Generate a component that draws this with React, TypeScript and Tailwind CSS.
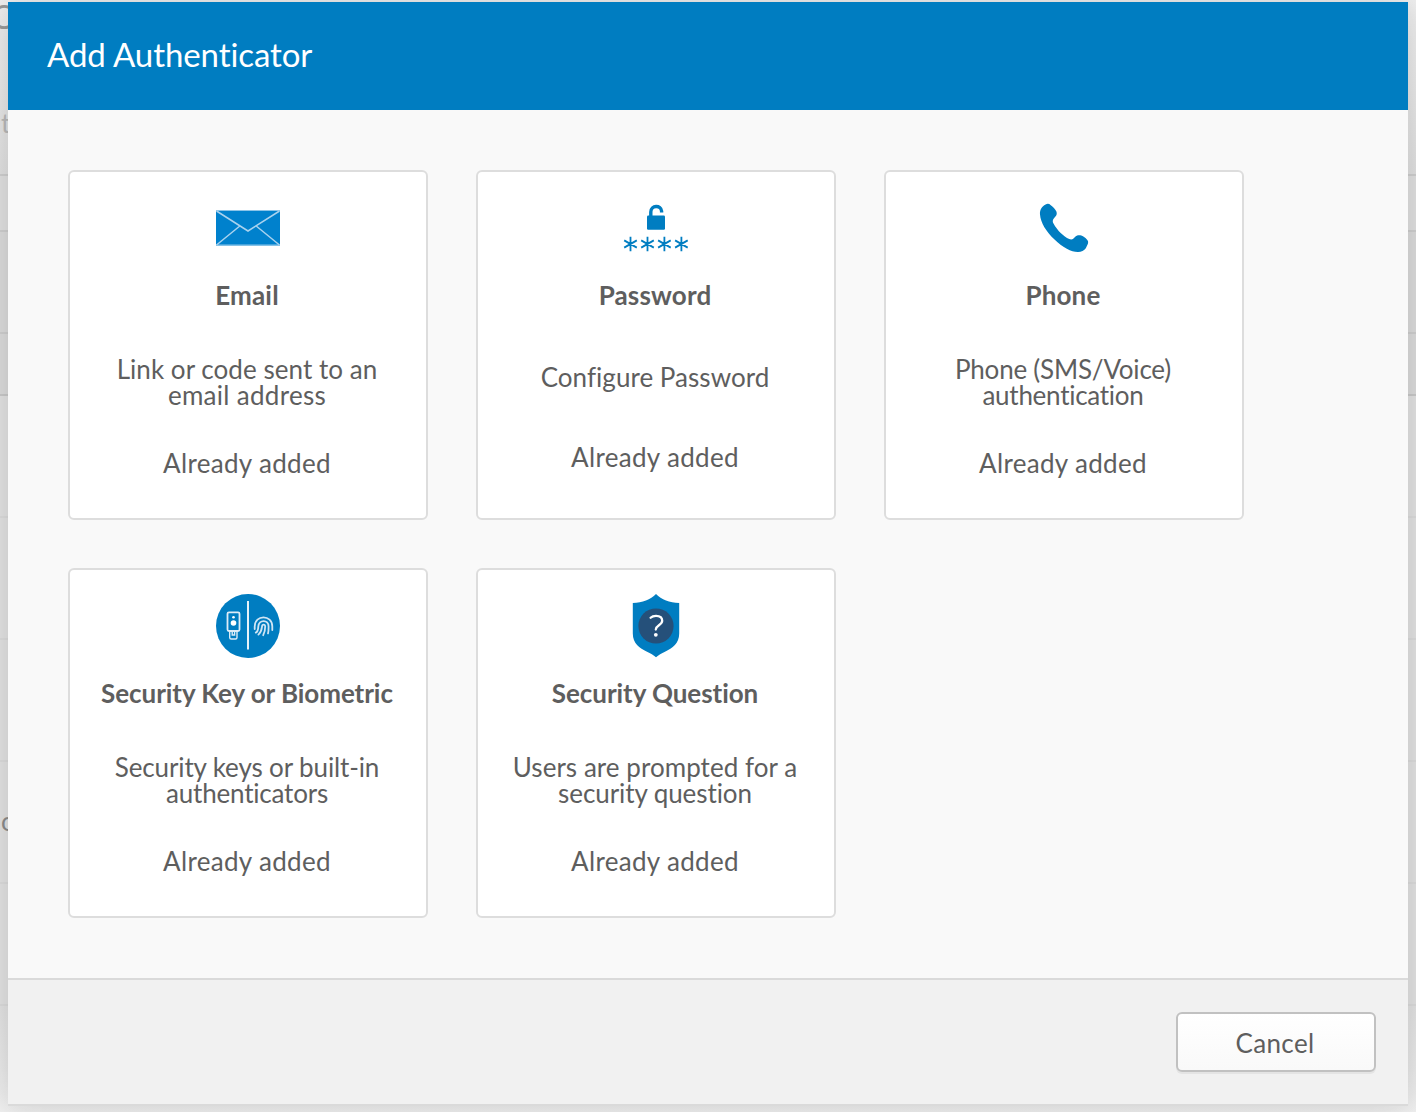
import type { ReactNode } from "react";

const EmailIcon = () => (
  <svg width="64" height="64" viewBox="0 0 64 64" fill="none">
    <rect x="0" y="14" width="64" height="35.5" fill="#0081cd" />
    <path d="M0 14.5H64M0 49H64" stroke="#8cc4e8" strokeWidth="1" />
    <path d="M0.5 15 32 35 63.5 15M0.5 49 23.8 30M63.5 49 40.2 30" stroke="#a9d2ee" strokeWidth="1.5" />
  </svg>
);

const star = (x: number) => `M${x} 40.7V55.3M${x - 6.3} 44.4 ${x + 6.3} 51.6M${x - 6.3} 51.6 ${x + 6.3} 44.4`;

const PasswordIcon = () => (
  <svg width="64" height="64" viewBox="0 0 64 64" fill="none" className="overflow-visible">
    <rect x="23" y="19.5" width="18" height="14.2" rx="1.2" fill="#007dc1" />
    <path d="M26.8 21V16C26.8 8.8 37.2 8.8 37.6 15.2V16.6" stroke="#007dc1" strokeWidth="3.4" />
    <path d={[6.5, 23.5, 40.4, 57.4].map(star).join("")} stroke="#007dc1" strokeWidth="1.8" />
  </svg>
);

const PhoneIcon = () => (
  <svg width="64" height="64" viewBox="0 0 64 64">
    <path
      d="M13.6 8.4C15.6 7.5 17.2 7.7 18.8 9.2C20.8 10.9 23.3 13 24.4 15.4C25.2 17.5 24.6 19.2 23.2 20.8L21.4 22.9C20.5 24.5 20.6 25.8 21.5 27.5C25.5 34.7 31.5 40.4 37.2 43C38.9 43.7 40.3 43.5 41.5 42.4L43.5 40.6C45 39.3 47 38.8 49.3 39.6C51.7 40.5 53.4 42 55.1 43.7C56.3 45 56.4 46.2 55.8 48.1L53.8 52.3C52.3 54.7 49.2 56 46.2 56C39.6 56.2 31 51.7 22.8 43.8C14.1 35.4 8.7 27 8 18.5C7.7 13.5 9.8 10.6 13.6 8.4Z"
      fill="#007dc1"
    />
  </svg>
);

const BiometricIcon = () => (
  <svg width="64" height="64" viewBox="0 0 64 64" fill="none">
    <circle cx="32" cy="32" r="32" fill="#007dc1" />
    <path d="M32 7V55.5" stroke="#fff" strokeWidth="1.8" />
    <g stroke="#dcecf7" strokeWidth="1.8">
      <rect x="11.5" y="18.3" width="12" height="18.7" rx="1.5" />
      <path d="M13.7 37.5V43.5Q13.7 45 15.2 45H19.5Q21 45 21 43.5V37.5M16.2 38V41H18.6V38" strokeWidth="1.4" />
    </g>
    <circle cx="17.5" cy="29" r="2.8" fill="#fff" />
    <circle cx="17.5" cy="23.2" r="1.3" fill="#fff" />
    <g stroke="#cfe5f4" strokeWidth="1.8" strokeLinecap="round">
      <path d="M38.7 35V32.5C38.7 20.4 56.3 20.4 56.3 32.5V36" />
      <path d="M39.8 38.6C42 37.6 42.2 35 42.3 32.6C42.7 25.2 52.7 25.2 52.6 32.5C52.6 35.5 52.6 37.5 52 39.4" />
      <path d="M42.4 40.6C45.6 38 45.7 35 46 32.6C46.2 30 49.2 30 49.2 32.5C49.2 36 48.6 38.5 47.2 41.2" />
    </g>
  </svg>
);

const QuestionIcon = () => (
  <svg width="64" height="64" viewBox="0 0 64 64" fill="none">
    <path d="M32 0C37.5 5.3 45.5 8.9 55.2 8.9V39.5C55.2 49.5 48.5 54 41 57.8C37.5 59.5 34.5 61 32 63.3C29.5 61 26.5 59.5 23 57.8C15.5 54 8.8 49.5 8.8 39.5V8.9C18.5 8.9 26.5 5.3 32 0Z" fill="#007dc1" />
    <circle cx="32" cy="32" r="17.6" fill="#25507a" />
    <path d="M26.6 23.8C28 22.4 29.8 21.9 32 21.9C35.7 21.9 38.2 23.6 38.2 26.8C38.2 31.2 31.8 31.3 31.8 35.5" stroke="#fff" strokeWidth="2.3" strokeLinecap="round" />
    <circle cx="31.8" cy="40.8" r="1.9" fill="#fff" />
  </svg>
);

type Card = {
  icon: ReactNode;
  title: string;
  titleClass: string;
  lines: { text: string; className: string }[];
  bodyClass: string;
};

const cards: Card[] = [
  {
    icon: <EmailIcon />,
    title: "Email",
    titleClass: "tracking-[0.2px]",
    lines: [
      { text: "Link or code sent to an", className: "tracking-[0.05px]" },
      { text: "email address", className: "tracking-[0.3px]" },
    ],
    bodyClass: "mt-[48px] mb-[42px]",
  },
  {
    icon: <PasswordIcon />,
    title: "Password",
    titleClass: "tracking-[0.15px]",
    lines: [{ text: "Configure Password", className: "tracking-[0.04px]" }],
    bodyClass: "mt-[56px] mb-[54px]",
  },
  {
    icon: <PhoneIcon />,
    title: "Phone",
    titleClass: "tracking-[0.15px]",
    lines: [
      { text: "Phone (SMS/Voice)", className: "tracking-[-0.22px]" },
      { text: "authentication", className: "tracking-[-0.27px]" },
    ],
    bodyClass: "mt-[48px] mb-[42px]",
  },
  {
    icon: <BiometricIcon />,
    title: "Security Key or Biometric",
    titleClass: "tracking-[-0.06px]",
    lines: [
      { text: "Security keys or built-in", className: "tracking-[-0.12px]" },
      { text: "authenticators", className: "tracking-[-0.2px]" },
    ],
    bodyClass: "mt-[48px] mb-[42px]",
  },
  {
    icon: <QuestionIcon />,
    title: "Security Question",
    titleClass: "tracking-[-0.06px]",
    lines: [
      { text: "Users are prompted for a", className: "tracking-[0.05px]" },
      { text: "security question", className: "tracking-[-0.08px]" },
    ],
    bodyClass: "mt-[48px] mb-[42px]",
  },
];

function AuthenticatorCard({ card }: { card: Card }) {
  return (
    <div className="flex h-[350px] w-[360px] flex-col items-center rounded-[6px] border-2 border-[#dddddd] bg-white pt-6 pr-[2px] text-[26px] leading-[26px] whitespace-nowrap">
      <div className="ml-[2px]">{card.icon}</div>
      <h2 className={`mt-[22px] font-bold ${card.titleClass}`}>{card.title}</h2>
      <div className={`flex flex-col items-center ${card.bodyClass}`}>
        {card.lines.map((line) => (
          <span key={line.text} className={line.className}>
            {line.text}
          </span>
        ))}
      </div>
      <p className="tracking-[0.33px]">Already added</p>
    </div>
  );
}

function Backdrop() {
  return (
    <div className="flex h-full flex-col bg-[#e3e3e3]">
      <div className="flex h-[176px] flex-col border-b-2 border-[#cfcfcf] bg-linear-to-b from-[#f0f0f0] to-[#e1e1e1]">
        <span className="-mt-[7px] -ml-[9px] text-[33px] leading-[46px] text-[#9a9a9a]">O</span>
        <span className="mt-[68px] ml-[1px] text-[26px] leading-[32px] text-[#b9b9b9]">t</span>
      </div>
      <div className="h-[56px] border-b-2 border-[#cfcfcf] bg-[#e1e1e1]" />
      <div className="h-[102px] border-b-2 border-[#cfcfcf] bg-[#dcdcdc]" />
      <div className="h-[62px] border-b-2 border-[#c9c9c9] bg-[#dcdcdc]" />
      <div className="h-[122px] border-b-2 border-[#dcdcdc]" />
      <div className="h-[122px] border-b-2 border-[#dcdcdc]" />
      <div className="h-[122px] border-b-2 border-[#dcdcdc]" />
      <div className="h-[122px] border-b-2 border-[#dcdcdc] pt-[43px] pl-[1px] text-[26px] leading-[32px] text-[#8c8c8c]">o</div>
      <div className="h-[122px] border-b-2 border-[#dcdcdc]" />
      <div className="flex-1 bg-linear-to-b from-[#e3e3e3] to-[#f0f0f0]" />
    </div>
  );
}

export default function App() {
  return (
    <div className="relative h-[1112px] w-[1416px] overflow-hidden font-['Lato',sans-serif] text-[#5e5e5e] [font-variant-ligatures:none]">
      <Backdrop />
      <div className="absolute top-[2px] left-2 flex h-[1104px] w-[1400px] flex-col bg-[#f9f9f9] shadow-[0_0_30px_rgba(0,0,0,0.16)]">
        <header className="flex h-[108px] items-center bg-[#007dc1] pb-[5px] pl-[39px]">
          <h1 className="text-[33px] leading-[40px] tracking-[-0.08px] text-white">Add Authenticator</h1>
        </header>
        <main className="grid h-[868px] grid-cols-[360px_360px_360px] content-start gap-12 px-[60px] pt-[60px]">
          {cards.map((card) => (
            <AuthenticatorCard key={card.title} card={card} />
          ))}
        </main>
        <footer className="flex flex-1 items-start justify-end border-y-2 border-[#dadada] bg-[#f1f1f1] pt-8 pr-8">
          <button className="flex h-[60px] w-[200px] items-center justify-center rounded-[6px] border-2 border-[#c1c1c1] bg-linear-to-b from-white to-[#f9f9f9] pt-[2px] pr-[2px] text-[26px] leading-[26px] tracking-[0.35px] shadow-[0_2px_0_#e4e4e4]">
            Cancel
          </button>
        </footer>
      </div>
    </div>
  );
}
